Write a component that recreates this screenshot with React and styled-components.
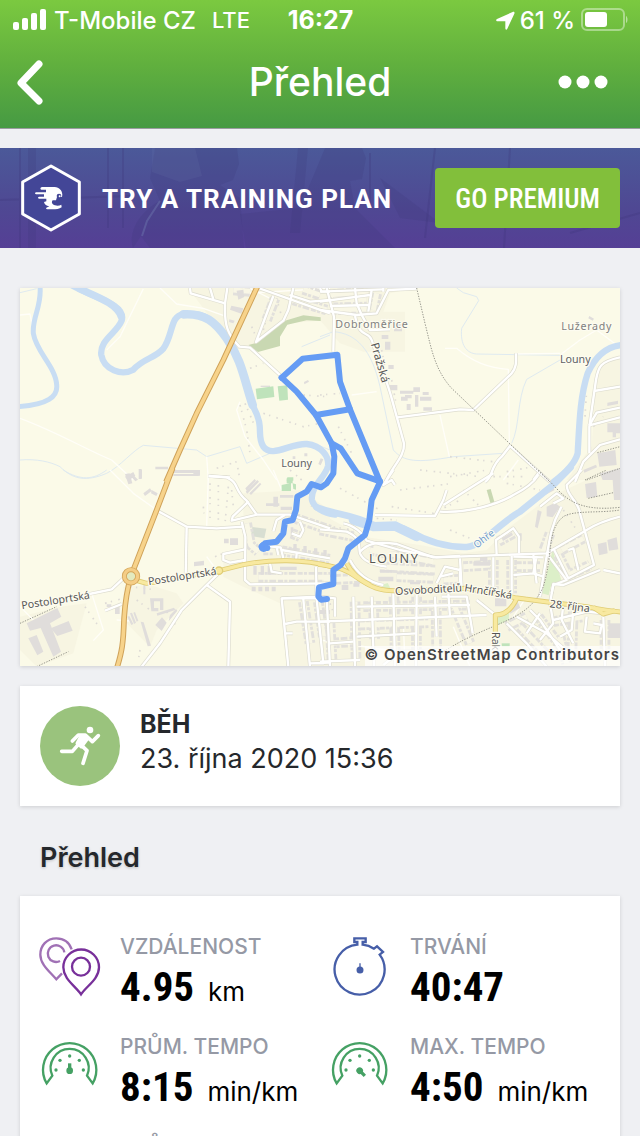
import React from 'react';
import styled, { createGlobalStyle } from 'styled-components';

const GlobalStyle = createGlobalStyle`
  * {
    box-sizing: border-box;
  }
  body {
    margin: 0;
    background: #eff0f3;
    color: #25282c;
    font-family: Inter, 'Liberation Sans', sans-serif;
  }
`

const Screen = styled.div`
  height: 100vh;
  overflow: hidden;
`

const Header = styled.header`
  color: white;
  background: linear-gradient(#7bc940, #61b03e 50%, #469a43);
  border-bottom: 1px solid #9a9da0;
`

const StatusBar = styled.div`
  display: grid;
  grid-template-columns: 1fr auto 1fr;
  align-items: center;
  height: 40px;
  padding: 0 12px 0 13px;
  font-size: 24px;
  font-weight: 500;
`

const StatusGroup = styled.div`
  display: flex;
  align-items: center;
  justify-content: ${props => props.$end ? 'flex-end' : 'flex-start'};
  gap: ${props => props.$end ? '5px' : '8px'};
  white-space: nowrap;
  font-size: ${props => props.$end ? '24px' : '24px'};
`

const Network = styled.span`
  margin-left: 8px;
  font-size: 22px;
`

const Clock = styled.time`
  font-size: 25px;
  font-weight: 700;
`

const NavBar = styled.nav`
  display: grid;
  grid-template-columns: 1fr auto 1fr;
  align-items: center;
  height: 88px;
  padding: 0 16px 4px;
`

const NavTitle = styled.h1`
  margin: 0;
  font-size: 39px;
  line-height: 48px;
  font-weight: 500;
`

const IconButton = styled.button`
  display: flex;
  padding: ${props => props.$side === 'end' ? '0 16px' : '0'};
  border: 0;
  background: none;
  color: inherit;
  justify-self: ${props => props.$side};
`

const Banner = styled.section`
  position: relative;
  display: flex;
  align-items: center;
  gap: 20px;
  height: 100px;
  margin-top: 19px;
  padding: 0 20px;
  background: linear-gradient(#4b5999, #4f4893 60%, #553f95);
`

const BannerPhoto = styled.svg`
  position: absolute;
  inset: 0;
  width: 100%;
  height: 100%;
`

const BannerLogo = styled.svg`
  position: relative;
  flex: none;
`

const BannerText = styled.div`
  position: relative;
  flex: 1;
  padding-top: 2px;
  font-family: Roboto, sans-serif;
  font-size: 26px;
  font-weight: 700;
  letter-spacing: 1px;
  color: white;
  white-space: nowrap;
`

const PremiumButton = styled.button`
  position: relative;
  height: 60px;
  padding: 2px 20px 0;
  border: 0;
  border-radius: 4px;
  background: #82bf3b;
  color: white;
  font-family: 'Roboto Condensed', 'Liberation Sans Narrow', Roboto, sans-serif;
  font-size: 27px;
  font-weight: 500;
  white-space: nowrap;
`

const Content = styled.main`
  padding: 40px 20px 0;
`

const Card = styled.section`
  background: white;
  box-shadow: 0 1px 4px rgba(0, 0, 0, 0.14);
`

const MapCard = styled(Card)`
  position: relative;
  margin-bottom: 20px;
  background: #fbfae8;
`

const MapDrawing = styled.svg`
  display: block;
  width: 100%;
  height: auto;
`

const Attribution = styled.small`
  position: absolute;
  right: 0;
  bottom: 0;
  height: 20px;
  font-size: 15px;
  line-height: 18px;
  font-weight: 600;
  letter-spacing: 1px;
  color: #454545;
  background: rgba(255, 255, 255, 0.7);
`

const ActivityCard = styled(Card)`
  display: flex;
  gap: 20px;
  padding: 20px;
`

const SportBadge = styled.div`
  width: 80px;
  height: 80px;
  border-radius: 50%;
  background: #9ac37d;
`

const Sport = styled.h2`
  margin: 0;
  font-size: 25px;
  line-height: 36px;
  font-weight: 700;
`

const StartTime = styled.time`
  display: block;
  font-size: 27px;
  line-height: 34px;
`

const SectionTitle = styled.h2`
  margin: 0;
  padding: 35px 20px 21px;
  font-size: 27px;
  line-height: 34px;
  font-weight: 600;
  text-shadow: 0 1px 3px rgba(0, 0, 0, 0.2);
`

const StatsCard = styled(Card)`
  display: grid;
  grid-template-columns: 1fr 1fr;
  row-gap: 20px;
  padding: 40px 0 40px 20px;
`

const StatBox = styled.div`
  display: flex;
  gap: 20px;
  height: 80px;
`

const StatLabel = styled.div`
  font-size: 21px;
  line-height: 22px;
  font-weight: 500;
  color: #9599a5;
`

const StatValue = styled.div`
  display: flex;
  align-items: baseline;
  gap: 14px;
  font-family: 'Liberation Sans Narrow', 'Roboto Condensed', Roboto, sans-serif;
  font-size: 41px;
  line-height: 58px;
  font-weight: 700;
  color: black;
`

const Unit = styled.span`
  font-family: Inter, sans-serif;
  font-size: 26px;
  font-weight: 400;
`

// The map is drawn in four tiles, layer by layer, so roads join at the seams.
const tiles = [
  {
    x: -30, y: -24,
    urban: ['M535 24 H960 V120 L830 130 L740 215 L650 180Z'],
    green: ['M715 195 L745 187 L825 122 L880 106 L932 112 V123 L890 121 L832 134 L810 170 V198 L744 216Z'],
    pitch: ['M737 326 L790 319 L793 351 L741 358Z', 'M803 319 L832 316 L834 359 L808 362Z', 'M832 592 H850 V602 H830Z'],
    blocks: ['M680 32 l20 -3 3 22 -18 8Z', 'M664 77 l36 8 -6 16 -34 -12Z', 'M658 118 l16 4 -4 8 -13 -4Z', 'M345 590 l25 -14 6 12 -22 14Z M386 567 h9 v30 h-9Z M436 560 h38 v8 h-38Z M490 582 h76 v6 h-76Z', 'M882 306 l12 -6 3 5 -14 8Z', 'M752 317 h28 v4 h-28Z', 'M932 535 l8 3 -8 18 -7 -4Z M883 520 h9 v9 h-9Z M848 529 h8 v8 h-8Z'],
    stream: ['M30 540 C80 536 120 545 150 560 C190 600 230 605 290 580 C330 560 370 510 400 496 L560 510 L590 530 L690 500 L710 550 L780 520', 'M30 38 L80 26', 'M875 200 L960 165', 'M925 496 L960 510'],
    path: ['M30 105 L60 102 L75 185 L120 270', 'M30 415 C150 460 230 510 305 540 L370 600', 'M400 26 L330 170 L290 210', 'M450 24 L500 72 L580 85 L650 110', 'M960 25 L700 40', 'M720 25 L790 60', 'M690 365 L680 390 L705 470 L760 540 L800 600', 'M590 530 L595 600'],
    dots: ['M690 375 L710 450 L720 520', 'M705 370 L735 440', 'M620 565 L680 545 L690 600', 'M760 400 L880 440 L930 430', 'M720 265 L760 250', 'M880 345 L950 350', 'M725 140 L742 180', 'M760 150 L785 60', 'M800 55 L815 110'],
    river: [['M90 20 C96 80 66 110 70 160 C78 215 138 262 140 315 C144 350 112 374 28 380', 15], ['M175 10 C240 50 350 70 335 122 C320 160 268 180 274 225 C282 270 335 288 370 269 C400 235 435 235 460 206 C490 165 480 106 520 103 C575 96 606 112 650 175 C700 240 700 310 730 380 C765 445 738 465 760 500 C785 535 840 490 890 492 C935 497 958 530 954 558 C948 590 900 620 906 660 C910 680 940 700 975 704', 19], ['M520 103 C585 99 615 125 650 175 C695 240 703 300 728 375', 26], ['M210 27 C260 50 320 70 334 110', 22]],
    street: ['M540 24 L542 40 L645 70 L652 24', 'M645 70 C642 140 655 165 688 200 L720 203 L815 290', 'M600 24 L610 58', 'M745 24 L960 100', 'M850 24 L835 90 L820 122 L738 186 L790 48', 'M838 45 L900 65 L960 60', 'M930 24 L935 35 L960 35', 'M596 588 L660 592'],
    lined: ['M850 60 L950 90', 'M770 120 L795 55', 'M880 28 L930 45', 'M670 30 L720 34'],
    rail: [],
    orange: ['M742 20 L640 240 L560 400 L510 510 L468 606'],
    yellow: [],
  },
  {
    x: 900, y: -24,
    urban: ['M0 24 H285 L210 40 L190 95 H255 V215 H130 L60 190 L0 120Z', 'M900 230 L830 270 L815 500 L740 600 H900Z'],
    green: [],
    pitch: [],
    blocks: ['M240 332 h40 v9 h-40Z M280 322 h20 v14 h-20Z M243 350 h20 v12 h-20Z M255 345 h20 v10 h-20Z M300 350 h34 v12 h-34Z M285 345 h10 v35 h-10Z M308 336 h18 v9 h-18Z M310 382 h26 v10 h-26Z M260 372 h12 v18 h-12Z', 'M185 165 h20 v12 h-20Z M195 185 h16 v24 h-16Z M205 255 h16 v12 h-16Z M208 315 h24 v16 h-24Z M222 132 h24 v22 h-24Z', 'M808 108 l14 8 -4 6 -13 -7Z', 'M862 430 h38 v30 h-12 v12 h-10 v-15 h-16Z M832 520 L886 510 L890 555 L838 560Z M840 580 L900 564 V600 H848Z M790 570 l38 -16 3 8 -38 16Z M862 368 l32 -6 v10 l-32 6Z'],
    stream: ['M410 24 L430 38 L470 50 L476 62 L425 145 C420 195 440 220 470 222 L720 226', 'M720 240 L620 298 C590 360 600 440 575 490', 'M0 170 L40 155 C110 160 155 210 180 320 L220 510 C250 545 290 550 400 530 L550 520'],
    path: ['M375 205 H410 C450 240 500 265 565 268 L568 490', 'M360 405 L388 530', 'M95 345 L170 335', 'M720 225 L780 180 L830 150 L890 195', 'M590 222 L720 220', 'M595 540 L550 600'],
    dots: ['M0 345 L60 340', 'M55 440 L95 520', 'M390 530 L520 545', 'M560 575 L640 560', 'M795 410 L800 330', 'M820 440 L850 410', 'M185 210 L200 290', 'M215 300 L228 370', 'M390 590 L500 570'],
    river: [['M905 195 C860 200 825 230 803 280 C780 350 778 430 773 520 C765 550 735 580 700 606', 19]],
    street: ['M0 90 L110 105 L170 100 L205 30 L290 26', 'M20 24 L42 110 L40 215', 'M0 65 L150 45 M30 78 L150 75', 'M0 35 L190 28', 'M105 24 L110 70 L125 105 M155 30 L145 95 M190 24 V35', 'M105 108 C120 180 145 150 155 180 C175 240 200 300 215 355 L252 490 C255 530 215 560 195 610', 'M125 105 L150 150 L210 148', 'M232 412 L420 388 L460 390 L575 280 C592 258 588 240 588 220', 'M495 606 C520 590 510 560 545 530 L570 498 L690 606', 'M900 232 C840 245 835 260 828 300 L808 440 V520', 'M900 320 L822 333 M900 383 L830 398 L808 436 M808 436 L900 412', 'M765 606 L790 545 L840 495 L900 478', 'M640 600 L655 580'],
    lined: ['M20 45 L145 35', 'M35 88 L140 88', 'M170 40 L160 90', 'M40 60 L140 58'],
    rail: ['M290 24 L315 130 C335 210 345 270 395 325 L690 606', 'M800 600 L900 565', 'M832 518 L900 500'],
    orange: [],
    yellow: [],
  },
  {
    x: -30, y: 546,
    urban: ['M340 350 L420 345 L500 370 L520 400 L440 480 L420 530 L350 460Z', 'M30 440 L150 410 L230 400 L190 550 L80 590 L30 540Z', 'M700 70 L870 60 L960 120 V590 H830 L810 400 L700 350 L640 320 L640 260 L700 240Z'],
    green: [],
    court: ['M727 171 L769 176 L763 205 L723 198Z'],
    pitch: ['M815 45 L843 39 V63 H815Z M830 25 h18 v15 h-18Z M848 40 l10 3 v16 l-8 -2Z'],
    blocks: ['M50 460 L142 414 L154 440 L120 460 L153 545 L130 560 L92 474 L60 482Z', 'M122 475 L176 453 L188 482 L142 498Z', 'M55 505 L80 495 L100 545 L82 556Z', 'M436 465 L456 442 L470 458 L455 483Z', 'M420 385 H460 V420 H450 V394 H432 V414 H445 V424 H424Z', 'M392 455 l9 2 22 70 -10 2Z', 'M552 276 l30 -4 v14 l-30 3Z', 'M725 350 h12 v14 h-12Z M745 350 h12 v14 h-12Z M765 350 h12 v14 h-12Z M785 350 h12 v14 h-12Z', 'M660 205 h24 v20 h-24Z M642 206 h14 v14 h-14Z', 'M730 288 h10 v26 h-10Z M752 288 h10 v26 h-10Z M773 288 h10 v26 h-10Z M810 290 h50 v10 h-50Z', 'M707 65 l35 -35 5 5 -35 36Z M718 70 l32 -32 4 5 -31 32Z M706 55 l28 -28 4 5 -28 30Z', 'M768 100 h40 v8 h-40Z M790 80 h14 v30 h-14Z M810 75 h40 v8 h-40Z M812 110 h34 v10 h-34Z', 'M360 430 l6 -2 12 30 -6 4Z M370 428 l5 -2 10 26 -5 3Z M352 440 l6 -2 12 24 -6 3Z', 'M345 12 l14 -2 8 30 -12 3Z M388 0 h8 v25 h-8Z M370 15 l14 14 -8 5 -12 -14Z', 'M440 430 L492 413 L496 420 L442 437Z M400 70 l20 -15 5 8 -20 15Z M425 60 l18 10 -4 8 -16 -8Z M490 0 h80 v17 h-20 v-8 h-60Z', 'M822 235 h36 v8 h-36Z M842 172 h8 v28 h-8Z M850 222 h10 v25 h-10Z M880 228 h10 v24 h-10Z M912 235 h10 v24 h-10Z M940 240 h10 v22 h-10Z', 'M480 435 l18 -18 4 5 -26 32Z M400 345 h6 v28 h-6Z M315 410 h14 v22 h-14Z M290 403 h14 v8 h-14Z'],
    stream: ['M160 0 C210 32 250 30 290 0'],
    path: ['M30 410 L70 450', 'M300 0 L370 70 L440 120', 'M245 370 L280 480 L250 512', 'M595 18 L590 170', 'M320 450 L360 453', 'M790 0 L815 60', 'M590 260 L620 300'],
    dots: ['M600 40 L600 160', 'M625 45 L625 165', 'M655 50 L645 160', 'M665 60 L670 110', 'M580 110 L582 130', 'M615 260 L640 250', 'M360 350 L440 360', 'M380 390 L420 420', 'M900 90 L905 110', 'M390 540 L385 570', 'M225 410 L270 475', 'M285 400 L340 385', 'M470 425 L500 470', 'M875 30 L840 0'],
    river: [],
    street: ['M442 122 L530 170 L620 175 L700 170', 'M530 172 L527 315', 'M596 18 L650 22 C690 40 670 60 710 92 L740 134 L840 134 L960 175', 'M740 134 L665 152 L668 140 L716 94 M695 155 L706 200 L705 330 L720 343 L960 340', 'M705 238 L640 252 L640 270 L660 278 L705 270', 'M395 590 L450 520 L515 420 L590 345 L628 308', 'M590 345 L660 395 L655 590', 'M238 372 L305 358 L340 325', 'M285 422 L335 402', 'M765 228 L812 232 L820 265 M800 232 L805 255', 'M790 184 L800 150 L825 135', 'M815 240 L960 265 M860 250 L858 275 M780 280 L785 305 L815 310', 'M918 290 L920 380 L815 385 L835 590', 'M815 385 H960 M880 388 L900 590 M920 388 L940 580 L900 580 L960 578', 'M825 462 L860 455 H960 M828 490 H848', 'M870 155 L880 180 L870 200 L845 190 M705 285 L700 270'],
    lined: ['M840 140 L960 180', 'M815 242 L960 268', 'M745 322 H960', 'M880 395 L900 520', 'M925 395 L940 500', 'M710 160 L722 225 L745 245', 'M760 240 L790 240', 'M845 190 L870 200'],
    rail: ['M30 460 L140 410', 'M80 590 L175 545'],
    orange: ['M488 -6 L440 120 L363 318 C345 380 344 420 342 450 C340 520 336 545 320 596'],
    yellow: ['M375 330 L410 340 L460 333 L550 315 L628 302 L700 284 C780 268 880 266 965 290'],
  },
  {
    x: 900, y: 546,
    urban: ['M0 130 L130 200 L300 225 L430 250 L500 240 L570 170 L690 80 L800 30 L900 0 V590 H0Z'],
    green: ['M500 60 L512 57 L525 102 L513 105Z'],
    park: ['M698 240 L728 345 L692 350 L686 376 L666 370Z', 'M530 445 L568 425 L566 450 L535 465Z', 'M183 345 l20 -6 8 16 -16 2Z'],
    pitch: ['M545 520 h24 v9 h-24Z'],
    blocks: ['M680 110 l25 -12 15 12 -22 32 -18 -3Z', 'M833 222 l26 -6 4 34 -26 6Z M862 210 l28 -8 5 36 -28 4Z', 'M795 42 L828 36 L832 80 L800 84Z M876 0 H900 V90 H882Z', 'M525 385 h34 v24 h-34Z M565 420 l28 -25 8 18 -30 18Z', 'M865 460 h35 v44 h-35Z', 'M460 275 h50 v12 h-50Z', 'M480 262 l22 -1 v12 h-22Z', 'M645 170 l8 -50 12 5 -12 50Z', 'M175 320 h45 v14 h-45Z M180 300 h35 v8 h-35Z M270 335 h30 v8 h-30Z', 'M0 420 h30 v12 h-30Z M65 345 h20 v15 h-20Z M100 340 h18 v10 h-18Z', 'M595 190 h10 v22 h-10Z M545 205 l30 -18 4 8 -30 18Z M670 70 l30 -16 4 6 -30 16Z'],
    stream: [],
    path: ['M400 470 L450 590', 'M0 510 L200 540', 'M250 455 L255 590', 'M620 380 L560 470'],
    dots: ['M60 55 L180 120', 'M215 110 L340 130 L420 90', 'M240 60 L400 40', 'M300 0 L480 20', 'M560 40 L660 60', 'M390 180 L450 205', 'M170 145 L230 150', 'M0 165 L100 180', 'M730 120 L770 180', 'M30 400 L45 440', 'M520 20 L620 20', 'M430 60 L480 110'],
    river: [['M-10 112 C60 138 90 130 160 165 C190 175 225 158 270 185 C340 225 400 232 440 231 C490 226 530 165 600 125 L705 40 L752 -8', 20], ['M100 150 L160 170 L225 168 L290 200', 28]],
    street: ['M220 0 L190 45 L215 30 L225 45', 'M165 135 L345 138 L370 90 L380 60 M370 105 L520 10', 'M360 125 C450 130 540 100 580 75 C610 60 640 40 655 15', 'M0 178 L80 185 C125 205 115 225 120 250 C130 275 160 285 200 290', 'M70 160 C100 165 130 190 140 212 L240 240 L350 262 L680 250 L800 180 C840 155 880 145 900 140', 'M120 245 C140 225 160 212 230 222 L340 262 L420 258 M90 270 C110 310 140 335 190 345', 'M530 255 L528 210 L580 175 L597 200 V250', 'M520 262 V380 M575 258 V370 M650 258 L640 310 L580 315 M640 310 L670 320 M580 260 L670 262', 'M680 250 L740 330 L700 345 L695 370', 'M700 235 L745 325 L822 285 L780 130 C775 90 740 80 740 45 L785 0', 'M725 110 C690 170 690 200 660 380', 'M745 240 L760 235 L775 300', 'M840 300 L730 345 L700 342 L690 400', 'M850 300 L900 310', 'M0 455 L120 450 L500 435', 'M220 370 L225 590 M290 370 L288 590 M155 380 L162 590 M100 380 L105 590 M345 380 L350 500 M20 380 L30 590 M385 370 L390 440', 'M110 410 L450 405 M110 500 L290 490 M0 380 L45 385 V440 M30 520 L100 515', 'M365 380 H440 L458 490 M470 390 L520 430', 'M350 340 L375 290 L420 300 V355 M360 320 L400 310 M420 265 L425 355', 'M0 575 L120 570', 'M560 460 L620 520 L680 590 M590 440 L680 490 L760 560 M690 400 L700 460 L660 510 M700 450 L800 425 L850 430 M620 490 L660 430 M730 400 L725 450 L760 520 M800 440 L795 485 L840 490 L845 465 L820 460 M850 440 L855 590 M760 420 L755 480 L720 500 M630 420 L660 450 L720 540', 'M660 110 L710 70 L730 85 L700 100', 'M640 255 L650 340 M190 585 L240 545 L370 540'],
    lined: ['M150 240 L340 275', 'M180 290 L345 300', 'M160 232 L230 238', 'M30 460 L36 570', 'M105 395 L108 570', 'M160 395 L164 510', 'M222 380 L226 570', 'M290 380 L289 570', 'M348 390 L350 530', 'M400 400 L450 520', 'M520 270 V370', 'M575 270 V370', 'M590 290 H660', 'M655 440 L745 560', 'M620 440 L560 470', 'M700 455 L790 440', 'M760 425 L755 560', 'M855 450 V570', 'M0 180 L100 200', 'M535 215 L580 190', 'M690 190 L670 245', 'M715 255 L745 315 L810 285', 'M725 240 L790 205', 'M600 470 L680 555', 'M430 290 L510 285', 'M120 465 L330 458', 'M30 520 L100 515', 'M720 500 L740 580', 'M370 330 L415 328', 'M10 330 L120 325', 'M230 320 L340 325', 'M130 410 L450 405'],
    rail: ['M655 0 L700 45 C740 90 780 125 900 112', 'M370 545 C520 450 620 460 670 350 C700 250 680 180 730 140 C760 120 840 130 900 120', 'M795 30 L860 0 M805 85 L880 68'],
    orange: [],
    yellow: ['M-5 283 C60 292 80 300 110 322 C150 350 180 365 235 362 L440 355 L585 383 L690 397 L800 410 C840 418 870 424 905 426', 'M80 280 C95 310 120 330 150 345', 'M590 386 C570 430 540 435 526 435 V490', 'M820 412 L850 432 L885 422'],
  },
]

const routePaths = [
  'M785 269 L848 212 L952 200 L960 281 L990 364 L1080 582 L1055 636 L1048 696 L1035 741 L1010 761 L985 781 L975 811 L962 831 L940 846 V888 L897 898 L895 925 L903 935 L921 933',
  'M785 269 L830 311 L888 381 L935 466 L943 506 L940 556 L920 586 L903 598 L875 588 L860 611 L832 626 L828 666 L818 696 L795 701 L790 736 L770 761 L735 766 L725 776 L742 780',
  'M888 381 L990 364',
  'M935 466 L962 481 L1012 556 L1080 580',
]

const labels = [
  { text: 'Dobroměřice', x: 946, y: 119, size: 32, spacing: 2, color: '#7f7f7f' },
  { text: 'Lužerady', x: 1624, y: 125, size: 32, spacing: 2, color: '#7f7f7f' },
  { text: 'Louny', x: 1620, y: 225, size: 32, color: '#5f6265' },
  { text: 'Louny', x: 784, y: 537, size: 32, color: '#5f6265' },
  { text: 'LOUNY', x: 1047, y: 824, size: 38, spacing: 5, color: '#555555' },
  { text: 'Pražská', x: 1052, y: 168, size: 34, rotate: 74, color: '#555555' },
  { text: 'Postoloprtská', x: 386, y: 892, size: 32, rotate: -9, color: '#555555' },
  { text: 'Postoloprtská', x: 6, y: 964, size: 32, rotate: -9, color: '#555555' },
  { text: 'Osvoboditelů', x: 1126, y: 921, size: 32, rotate: -3, color: '#555555' },
  { text: 'Hrnčířská', x: 1332, y: 910, size: 32, rotate: 9, color: '#555555' },
  { text: '28. října', x: 1588, y: 958, size: 32, rotate: 7, color: '#555555' },
  { text: 'Ohře', x: 1370, y: 782, size: 30, rotate: -38, color: '#6d9bcf' },
  { text: 'Rak', x: 1416, y: 1032, size: 32, rotate: 90, color: '#555555' },
]

function Layer({ name, ...rest }) {
  return tiles.map((tile, i) => (
    <g key={i} transform={`translate(${tile.x} ${tile.y})`} fill="none" strokeLinejoin="round" {...rest}>
      {(tile[name] || []).map(d => <path key={d} d={d} />)}
    </g>
  ))
}

function RouteMap() {
  return (
    <MapDrawing viewBox="0 0 1800 1134" role="img" aria-label="Mapa trasy">
      <rect width="1800" height="1134" fill="#fbfae8" />
      <Layer name="urban" fill="#f7f5e2" />
      <Layer name="green" fill="#c9d8b2" />
      <Layer name="court" fill="#d8ded2" />
      <Layer name="park" fill="#dcefc8" />
      <Layer name="stream" stroke="#dfeaf0" strokeWidth="3" />
      <Layer name="path" stroke="#fffef8" strokeWidth="4" />
      <Layer name="dots" stroke="#dedbd6" strokeWidth="5" strokeDasharray="5 13 4 19" />
      <Layer name="lined" stroke="#e2e0dc" strokeWidth="32" strokeDasharray="15 4 9 5 20 6" />
      <Layer name="lined" stroke="#f9f7e6" strokeWidth="15" />
      <Layer name="blocks" fill="#e0dddb" />
      <Layer name="pitch" fill="#bfe3bb" />
      {tiles.map((tile, i) => (
        <g key={i} transform={`translate(${tile.x} ${tile.y})`} fill="none" stroke="#c8ddf3" strokeLinecap="round">
          {tile.river.map(([d, width]) => <path key={d} d={d} strokeWidth={width} />)}
        </g>
      ))}
      <Layer name="street" stroke="#deddd0" strokeWidth="11" />
      <Layer name="street" stroke="#ffffff" strokeWidth="7" />
      <Layer name="rail" stroke="#96968c" strokeWidth="3" strokeDasharray="4 4" />
      <Layer name="yellow" stroke="#e0cd76" strokeWidth="15" />
      <Layer name="yellow" stroke="#f8e9a0" strokeWidth="10" />
      <circle cx="597" cy="848" r="11" fill="#f8e9a0" stroke="#e0cd76" strokeWidth="4" />
      <Layer name="orange" stroke="#cfa259" strokeWidth="17" />
      <Layer name="orange" stroke="#f7d38b" strokeWidth="11" />
      <circle cx="333" cy="865" r="20" fill="#e3eabf" stroke="#d4a65a" strokeWidth="15" />
      <circle cx="333" cy="865" r="20" fill="none" stroke="#f4cd86" strokeWidth="10" />
      <g fontFamily="'Noto Sans', sans-serif" stroke="#fdfcf0" strokeWidth="7" strokeLinejoin="round" paintOrder="stroke">
        {labels.map((label, i) => (
          <text
            key={i}
            fontSize={label.size}
            letterSpacing={label.spacing || 0}
            fill={label.color}
            transform={`translate(${label.x} ${label.y}) rotate(${label.rotate || 0})`}
          >
            {label.text}
          </text>
        ))}
      </g>
      <g fill="none" stroke="#659cf4" strokeWidth="18" strokeLinejoin="round" strokeLinecap="round">
        {routePaths.map(d => <path key={d} d={d} />)}
        <circle cx="731" cy="777" r="6" />
      </g>
    </MapDrawing>
  )
}

function DistanceIcon() {
  return (
    <svg width="60" height="60" viewBox="0 0 180 180" fill="none" strokeWidth="7" overflow="visible">
      <g stroke="#a071b5">
        <path d="M95 40 C87 17 69 7 49 7 C20 7 1 29 1 56 C1 86 31 108 49 130 L66 112" />
        <path d="M73 49 A25 25 0 1 0 60 75" />
      </g>
      <g stroke="#78309a">
        <path d="M123 175 C106 150 70 129 70 94 A53 53 0 0 1 177 94 C177 129 140 150 123 175Z" />
        <circle cx="123" cy="92" r="27" />
      </g>
    </svg>
  )
}

function StopwatchIcon() {
  return (
    <svg width="60" height="60" viewBox="0 0 180 180" fill="none" stroke="#465ea8" strokeWidth="7">
      <path d="M82 26 V18 H73 V7 H107 V18 H98 V26 A76 76 0 0 1 132 38 L141 31 L159 48 L149 56 A75 75 0 1 1 82 26Z" />
      <path d="M90 82 V98" strokeWidth="4" />
      <circle cx="90" cy="102" r="7" fill="#465ea8" />
    </svg>
  )
}

function GaugeIcon({ angle }) {
  return (
    <svg width="60" height="60" viewBox="0 0 180 180" fill="none" stroke="#45a164" strokeWidth="7">
      <path d="M20 142 A80 80 0 1 1 158 142 L141 119 A57 57 0 1 0 37 119Z" />
      <g fill="#45a164" stroke="none">
        <circle cx="48" cy="102" r="5" />
        <circle cx="60" cy="73" r="5" />
        <circle cx="89" cy="60" r="5" />
        <circle cx="118" cy="73" r="5" />
        <circle cx="130" cy="102" r="5" />
        <g transform={`rotate(${angle} 89 104)`}>
          <circle cx="89" cy="104" r="10" />
          <rect x="84" y="82" width="10" height="20" />
        </g>
      </g>
    </svg>
  )
}

function Stat({ icon, label, value, unit }) {
  return (
    <StatBox>
      {icon}
      <div>
        <StatLabel>{label}</StatLabel>
        <StatValue>{value}{unit && <Unit>{unit}</Unit>}</StatValue>
      </div>
    </StatBox>
  )
}

function TopBar() {
  return (
    <Header>
      <StatusBar>
        <StatusGroup>
          <svg width="33" height="22" viewBox="0 0 33 22" fill="white">
            <rect y="13" width="6" height="8" rx="2" />
            <rect x="9" y="9" width="6" height="12" rx="2" />
            <rect x="18" y="4" width="6" height="17" rx="2" />
            <rect x="27" width="6" height="21" rx="2" />
          </svg>
          <span>T-Mobile CZ</span>
          <Network>LTE</Network>
        </StatusGroup>
        <Clock>16:27</Clock>
        <StatusGroup $end>
          <svg width="19" height="19" viewBox="0 0 57 57" fill="white">
            <path d="M3 24 L50 3 C54 1 57 4 55 8 L34 53 C32 58 28 57 28 52 V31 H5 C0 31 -1 26 3 24Z" />
          </svg>
          <span>61 %</span>
          <svg width="48" height="24" viewBox="0 0 48 24" fill="none">
            <rect x="2" y="1" width="42" height="21" rx="5" stroke="white" strokeOpacity="0.4" strokeWidth="2" />
            <rect x="5" y="4" width="22" height="15" rx="3" fill="white" />
            <path d="M46 8 C48 9 48 14 46 15Z" fill="white" fillOpacity="0.5" />
          </svg>
        </StatusGroup>
      </StatusBar>
      <NavBar>
        <IconButton $side="start" aria-label="Zpět">
          <svg width="28" height="46" viewBox="0 0 28 46" fill="none" stroke="white" strokeWidth="7" strokeLinecap="round" strokeLinejoin="round">
            <path d="M23 5 L5 24 L23 42" />
          </svg>
        </IconButton>
        <NavTitle>Přehled</NavTitle>
        <IconButton $side="end" aria-label="Další">
          <svg width="50" height="14" viewBox="0 0 50 14" fill="white">
            <circle cx="7" cy="7" r="6.5" />
            <circle cx="25" cy="7" r="6.5" />
            <circle cx="43" cy="7" r="6.5" />
          </svg>
        </IconButton>
      </NavBar>
    </Header>
  )
}

function PremiumBanner() {
  return (
    <Banner>
      <BannerPhoto viewBox="0 0 640 100" preserveAspectRatio="xMidYMid slice">
        <g fill="#3b3577" fillOpacity="0.2">
          <path d="M195 0 H237 L239 16 L233 32 L220 37 L240 50 L244 100 H150 L141 88 L133 100 C127 80 145 60 160 53 L150 30 L155 0Z" />
          <path d="M325 0 H362 L366 10 L362 31 L350 33 L355 60 L395 100 H246 L240 66 L300 60Z" />
          <path d="M28 0 H36 V100 H28Z M298 0 H308 L300 85 H290Z M380 30 L440 75 L400 70Z" />
        </g>
        <g stroke="#3b3577" strokeOpacity="0.25" strokeWidth="2" fill="none">
          <path d="M108 0 V80 M123 0 V80 M0 52 L130 48 M370 5 V60 M510 0 L504 100 M435 0 L425 90 M640 65 L570 85 M20 0 V100" />
        </g>
        <path d="M152 0 H195 L202 28 L180 34 L152 24Z" fill="#7480b4" fillOpacity="0.14" />
        <path d="M160 53 L147 73 L142 88" stroke="#7480b4" strokeOpacity="0.4" strokeWidth="2" fill="none" />
      </BannerPhoto>
      <BannerLogo width="62" height="68" viewBox="0 0 186 204">
        <path d="M93 6 L178 54 V150 L93 198 L8 150 V54Z" fill="#434697" stroke="white" strokeWidth="9" strokeLinejoin="round" />
        <path
          d="M66 69 H104 C118 70 127 80 127 92 L126 99 H111 L108 109 H98 C93 116 97 122 105 124 C112 126 119 125 124 122 L125 130 C118 135 108 136 98 136 H82 C77 136 77 131 82 130 L88 127 C78 125 73 120 72 114 L79 112 V104 H57 C53 103 53 99 57 98 H72 V91 H48 C44 90 44 86 48 85 H78 V77 H64 C60 76 60 70 66 69Z"
          fill="white"
        />
        <circle cx="117" cy="96" r="7" fill="#434697" />
        <circle cx="119" cy="97" r="3" fill="white" />
      </BannerLogo>
      <BannerText>TRY A TRAINING PLAN</BannerText>
      <PremiumButton>GO PREMIUM</PremiumButton>
    </Banner>
  )
}

function RunnerIcon() {
  return (
    <svg width="80" height="80" viewBox="0 0 240 240" fill="none" stroke="white" strokeWidth="11" strokeLinecap="round" strokeLinejoin="round">
      <circle cx="150" cy="72" r="10" fill="white" stroke="none" />
      <path d="M97 105 L115 87 H136 L157 107 L175 89" />
      <path d="M124 90 L142 98 L124 122 L112 112Z" fill="white" />
      <path d="M65 136 H97 L118 112 L141 134 L129 172" />
    </svg>
  )
}

function App() {
  return (
    <Screen>
      <GlobalStyle />
      <TopBar />
      <PremiumBanner />
      <Content>
        <MapCard>
          <RouteMap />
          <Attribution>© OpenStreetMap Contributors</Attribution>
        </MapCard>
        <ActivityCard>
          <SportBadge><RunnerIcon /></SportBadge>
          <div>
            <Sport>BĚH</Sport>
            <StartTime>23. října 2020 15:36</StartTime>
          </div>
        </ActivityCard>
        <SectionTitle>Přehled</SectionTitle>
        <StatsCard>
          <Stat icon={<DistanceIcon />} label="VZDÁLENOST" value="4.95" unit="km" />
          <Stat icon={<StopwatchIcon />} label="TRVÁNÍ" value="40:47" />
          <Stat icon={<GaugeIcon angle={0} />} label="PRŮM. TEMPO" value="8:15" unit="min/km" />
          <Stat icon={<GaugeIcon angle={135} />} label="MAX. TEMPO" value="4:50" unit="min/km" />
          <Stat icon={<GaugeIcon angle={0} />} label="PRŮM." />
        </StatsCard>
      </Content>
    </Screen>
  )
}

export default App;
